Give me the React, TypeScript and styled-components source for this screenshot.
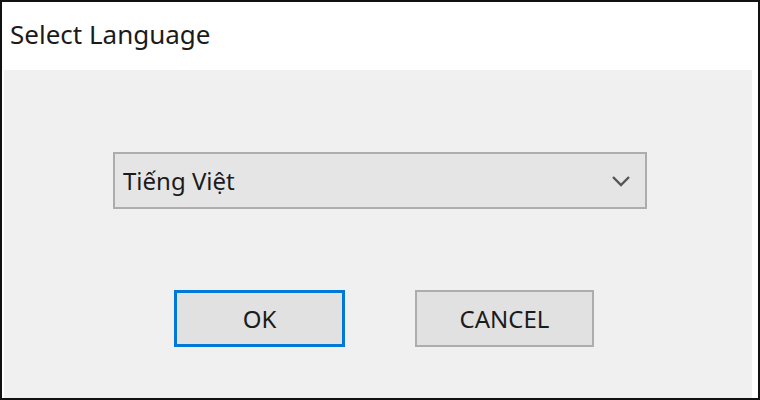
import React, { useState } from 'react';
import styled, { createGlobalStyle } from 'styled-components';

const GlobalStyle = createGlobalStyle`
  html, body {
    margin: 0;
    padding: 0;
    background: #ffffff;
  }
`;

const Frame = styled.div`
  box-sizing: border-box;
  width: 760px;
  height: 400px;
  border: 2px solid #111111;
  display: flex;
  flex-direction: column;
  background: #ffffff;
  font-family: 'Noto Sans', 'Open Sans', sans-serif;
  color: #1b1b1b;
`;

const TitleBar = styled.div`
  height: 68px;
  display: flex;
  align-items: center;
  padding-left: 8px;
  padding-bottom: 4px;
  box-sizing: border-box;
  font-size: 26px;
`;

const Body = styled.div`
  flex: 1;
  margin: 0 6px 0 2px;
  background: #f0f0f0;
  display: flex;
  flex-direction: column;
  align-items: center;
  padding-top: 82px;
  box-sizing: border-box;
`;

const SelectBox = styled.div`
  box-sizing: border-box;
  width: 534px;
  height: 57px;
  margin-left: 4px;
  border: 2px solid #adadad;
  background: #e5e5e5;
  display: flex;
  align-items: center;
  justify-content: space-between;
  padding: 0 14px 0 8px;
  font-size: 24px;
  cursor: default;
`;

const ButtonRow = styled.div`
  display: flex;
  gap: 70px;
  margin-top: 81px;
  margin-left: 12px;
`;

const DialogButton = styled.button<{ $primary?: boolean; $width: number }>`
  box-sizing: border-box;
  width: ${(p) => p.$width}px;
  height: 57px;
  background: #e1e1e1;
  border: ${(p) => (p.$primary ? '3px solid #0078d7' : '2px solid #adadad')};
  font-family: 'Noto Sans', 'Open Sans', sans-serif;
  font-size: 24px;
  color: #1b1b1b;
  padding: 0;
  cursor: pointer;
`;

const Chevron = () => (
  <svg width="20" height="12" viewBox="0 0 20 12">
    <path d="M2 2 L10 10 L18 2" fill="none" stroke="#555555" strokeWidth="2.4" />
  </svg>
);

const App = () => {
  const [lang] = useState('Tiếng Việt');
  return (
    <>
      <GlobalStyle />
      <Frame>
        <TitleBar>Select Language</TitleBar>
        <Body>
          <SelectBox>
            <span>{lang}</span>
            <Chevron />
          </SelectBox>
          <ButtonRow>
            <DialogButton $primary $width={171}>
              OK
            </DialogButton>
            <DialogButton $width={179}>CANCEL</DialogButton>
          </ButtonRow>
        </Body>
      </Frame>
    </>
  );
};

export default App;
